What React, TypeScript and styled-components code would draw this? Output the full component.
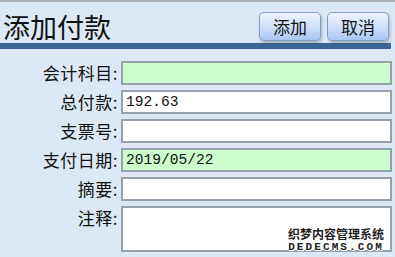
import React from "react";
import styled, {createGlobalStyle} from "styled-components";

const GlobalStyle = createGlobalStyle`
  html, body {
    margin: 0;
    padding: 0;
    background: #dce8f5;
  }
  body {
    font-family: "Noto Sans CJK SC", "Liberation Sans", sans-serif;
    color: #111;
  }
`;

const Page = styled.div`
  width: 395px;
  height: 257px;
  border-top: 2px solid #a9acb0;
  box-sizing: border-box;
  position: relative;
  overflow: hidden;
`;

const Header = styled.div`
  display: flex;
  justify-content: space-between;
  align-items: center;
  height: 41px;
  padding: 0 6px 0 3px;
`;

const Title = styled.h1`
  margin: 0;
  font-size: 27px;
  font-weight: 400;
  line-height: 1;
  padding-top: 8px;
`;

const Buttons = styled.div`
  display: flex;
  gap: 6px;
  padding-top: 8px;
`;

const Btn = styled.button`
  width: 62px;
  height: 29px;
  border: 1px solid #7f9fcf;
  border-radius: 5px;
  background: linear-gradient(#f0f5fd, #c9dcf9 60%, #a8c6f4);
  box-shadow: 1px 2px 3px rgba(0, 0, 0, 0.25);
  font-family: "Noto Sans CJK SC", sans-serif;
  font-size: 17px;
  color: #111;
  padding: 0;
`;

const Bar = styled.div`
  height: 6px;
  margin-right: 4px;
  background: #3a6596;
`;

const Form = styled.div`
  display: flex;
  flex-direction: column;
  gap: 5px;
  padding: 12px 3px 0 0;
`;

const Row = styled.div`
  display: grid;
  grid-template-columns: 118px 1fr;
  gap: 3px;
  align-items: start;
`;

const Label = styled.label`
  text-align: right;
  font-size: 17px;
  letter-spacing: 0.5px;
  line-height: 24px;
`;

const Field = styled.div<{ $green?: boolean; $tall?: boolean }>`
  height: ${p => (p.$tall ? 46 : 24)}px;
  box-sizing: border-box;
  border: 2px solid #96a1ab;
  background: ${p => (p.$green ? "#ccfccc" : "#fff")};
  font-family: "Liberation Mono", monospace;
  font-size: 14.6px;
  line-height: 20px;
  padding-left: 3px;
`;

const Watermark = styled.div`
  position: absolute;
  right: 11px;
  bottom: 4px;
  display: flex;
  flex-direction: column;
  align-items: center;
  font-weight: 700;
  color: #222;
  text-shadow: 1px 0 #fff, -1px 0 #fff, 0 1px #fff, 0 -1px #fff, 1px 1px #fff, -1px -1px #fff;
  line-height: 1;
`;

const WmTop = styled.span`
  font-size: 12px;
`;

const WmBottom = styled.span`
  font-family: "Liberation Mono", monospace;
  font-size: 11px;
  letter-spacing: 2.1px;
  margin-top: 2px;
`;

const rows = [
    {label: "会计科目:", value: "", green: true},
    {label: "总付款:", value: "192.63"},
    {label: "支票号:", value: ""},
    {label: "支付日期:", value: "2019/05/22", green: true},
    {label: "摘要:", value: ""},
    {label: "注释:", value: "", tall: true},
];

export default function App() {
    return (
        <Page>
            <GlobalStyle/>
            <Header>
                <Title>添加付款</Title>
                <Buttons>
                    <Btn>添加</Btn>
                    <Btn>取消</Btn>
                </Buttons>
            </Header>
            <Bar/>
            <Form>
                {rows.map(r => (
                    <Row key={r.label}>
                        <Label>{r.label}</Label>
                        <Field $green={r.green} $tall={r.tall}>{r.value}</Field>
                    </Row>
                ))}
            </Form>
            <Watermark>
                <WmTop>织梦内容管理系统</WmTop>
                <WmBottom>DEDECMS.COM</WmBottom>
            </Watermark>
        </Page>
    );
}
